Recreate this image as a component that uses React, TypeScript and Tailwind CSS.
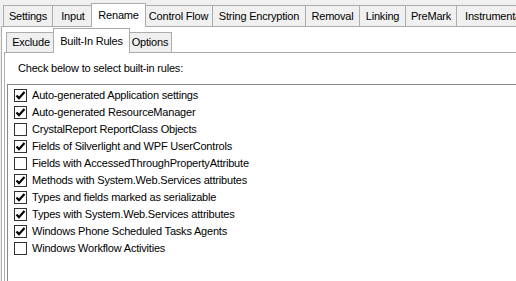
import React from 'react';

const outerTabs = [
  { label: 'Settings', w: 'w-[49px]' },
  { label: 'Input', w: 'w-[41px]' },
  { label: 'Rename', w: 'w-[55px]', active: true },
  { label: 'Control Flow', w: 'w-[68px]' },
  { label: 'String Encryption', w: 'w-[93px]' },
  { label: 'Removal', w: 'w-[54px]' },
  { label: 'Linking', w: 'w-[46px]' },
  { label: 'PreMark', w: 'w-[51px]' },
  { label: 'Instrumentation', w: 'w-[90px]' },
];

const innerTabs = [
  { label: 'Exclude', w: 'w-[49px]' },
  { label: 'Built-In Rules', w: 'w-[77px]', active: true },
  { label: 'Options', w: 'w-[44px]', last: true },
];

const rules = [
  { label: 'Auto-generated Application settings', checked: true },
  { label: 'Auto-generated ResourceManager', checked: true },
  { label: 'CrystalReport ReportClass Objects', checked: false },
  { label: 'Fields of Silverlight and WPF UserControls', checked: true },
  { label: 'Fields with AccessedThroughPropertyAttribute', checked: false },
  { label: 'Methods with System.Web.Services attributes', checked: true },
  { label: 'Types and fields marked as serializable', checked: true },
  { label: 'Types with System.Web.Services attributes', checked: true },
  { label: 'Windows Phone Scheduled Tasks Agents', checked: true },
  { label: 'Windows Workflow Activities', checked: false },
];

function Tab({ label, w, active, last, short }: { label: string; w: string; active?: boolean; last?: boolean; short?: boolean }) {
  if (active) {
    return (
      <div
        className={`${w} ${short ? 'h-[25px] pt-[6px]' : 'h-[24px] pt-[5px]'} relative z-10 -mx-[2px] -mb-px shrink-0 flex items-start justify-center bg-white border border-b-0 border-[#acacac]`}
      >
        {label}
      </div>
    );
  }
  return (
    <div
      className={`${w} ${short ? 'h-[20px]' : 'h-[21px]'} shrink-0 flex items-center justify-center bg-[#f0f0f0] border-t border-l border-[#acacac] ${last ? 'border-r' : ''}`}
    >
      {label}
    </div>
  );
}

function CheckBox({ checked }: { checked: boolean }) {
  return (
    <span className="w-[13px] h-[13px] shrink-0 border border-[#333333] bg-white flex items-center justify-center">
      {checked && (
        <svg width="11" height="11" viewBox="0 0 11 11">
          <path d="M1.5 5.5 L4 8.2 L9.5 2" fill="none" stroke="#000" strokeWidth="2.2" />
        </svg>
      )}
    </span>
  );
}

export default function App() {
  return (
    <div className="w-[516px] h-[281px] overflow-hidden bg-[#f0f0f0] text-[11px] leading-[13px] tracking-[-0.2px] text-black font-['Liberation_Sans',Arial,sans-serif] flex flex-col">
      <div className="h-[26px] flex items-end pl-[3px] shrink-0">
        {outerTabs.map((t) => (
          <Tab key={t.label} {...t} />
        ))}
      </div>

      <div className="flex-1 ml-px border-t border-l border-[#acacac] bg-white pl-[2px] flex flex-col">
        <div className="h-[25px] flex items-end pl-[2px] shrink-0">
          {innerTabs.map((t) => (
            <Tab key={t.label} {...t} short />
          ))}
        </div>

        <div className="flex-1 border-t border-l border-[#acacac] bg-white flex flex-col">
          <p className="pl-[13px] pt-[9px] h-[31px]">Check below to select built-in rules:</p>

          <div className="flex-1 ml-[2px] border-t border-l border-[#828790] bg-white pt-[2px] pl-[6px]">
            {rules.map((r) => (
              <div key={r.label} className="h-[17px] flex items-center gap-[5px]">
                <CheckBox checked={r.checked} />
                <span className="whitespace-nowrap">{r.label}</span>
              </div>
            ))}
          </div>
        </div>
      </div>
    </div>
  );
}
